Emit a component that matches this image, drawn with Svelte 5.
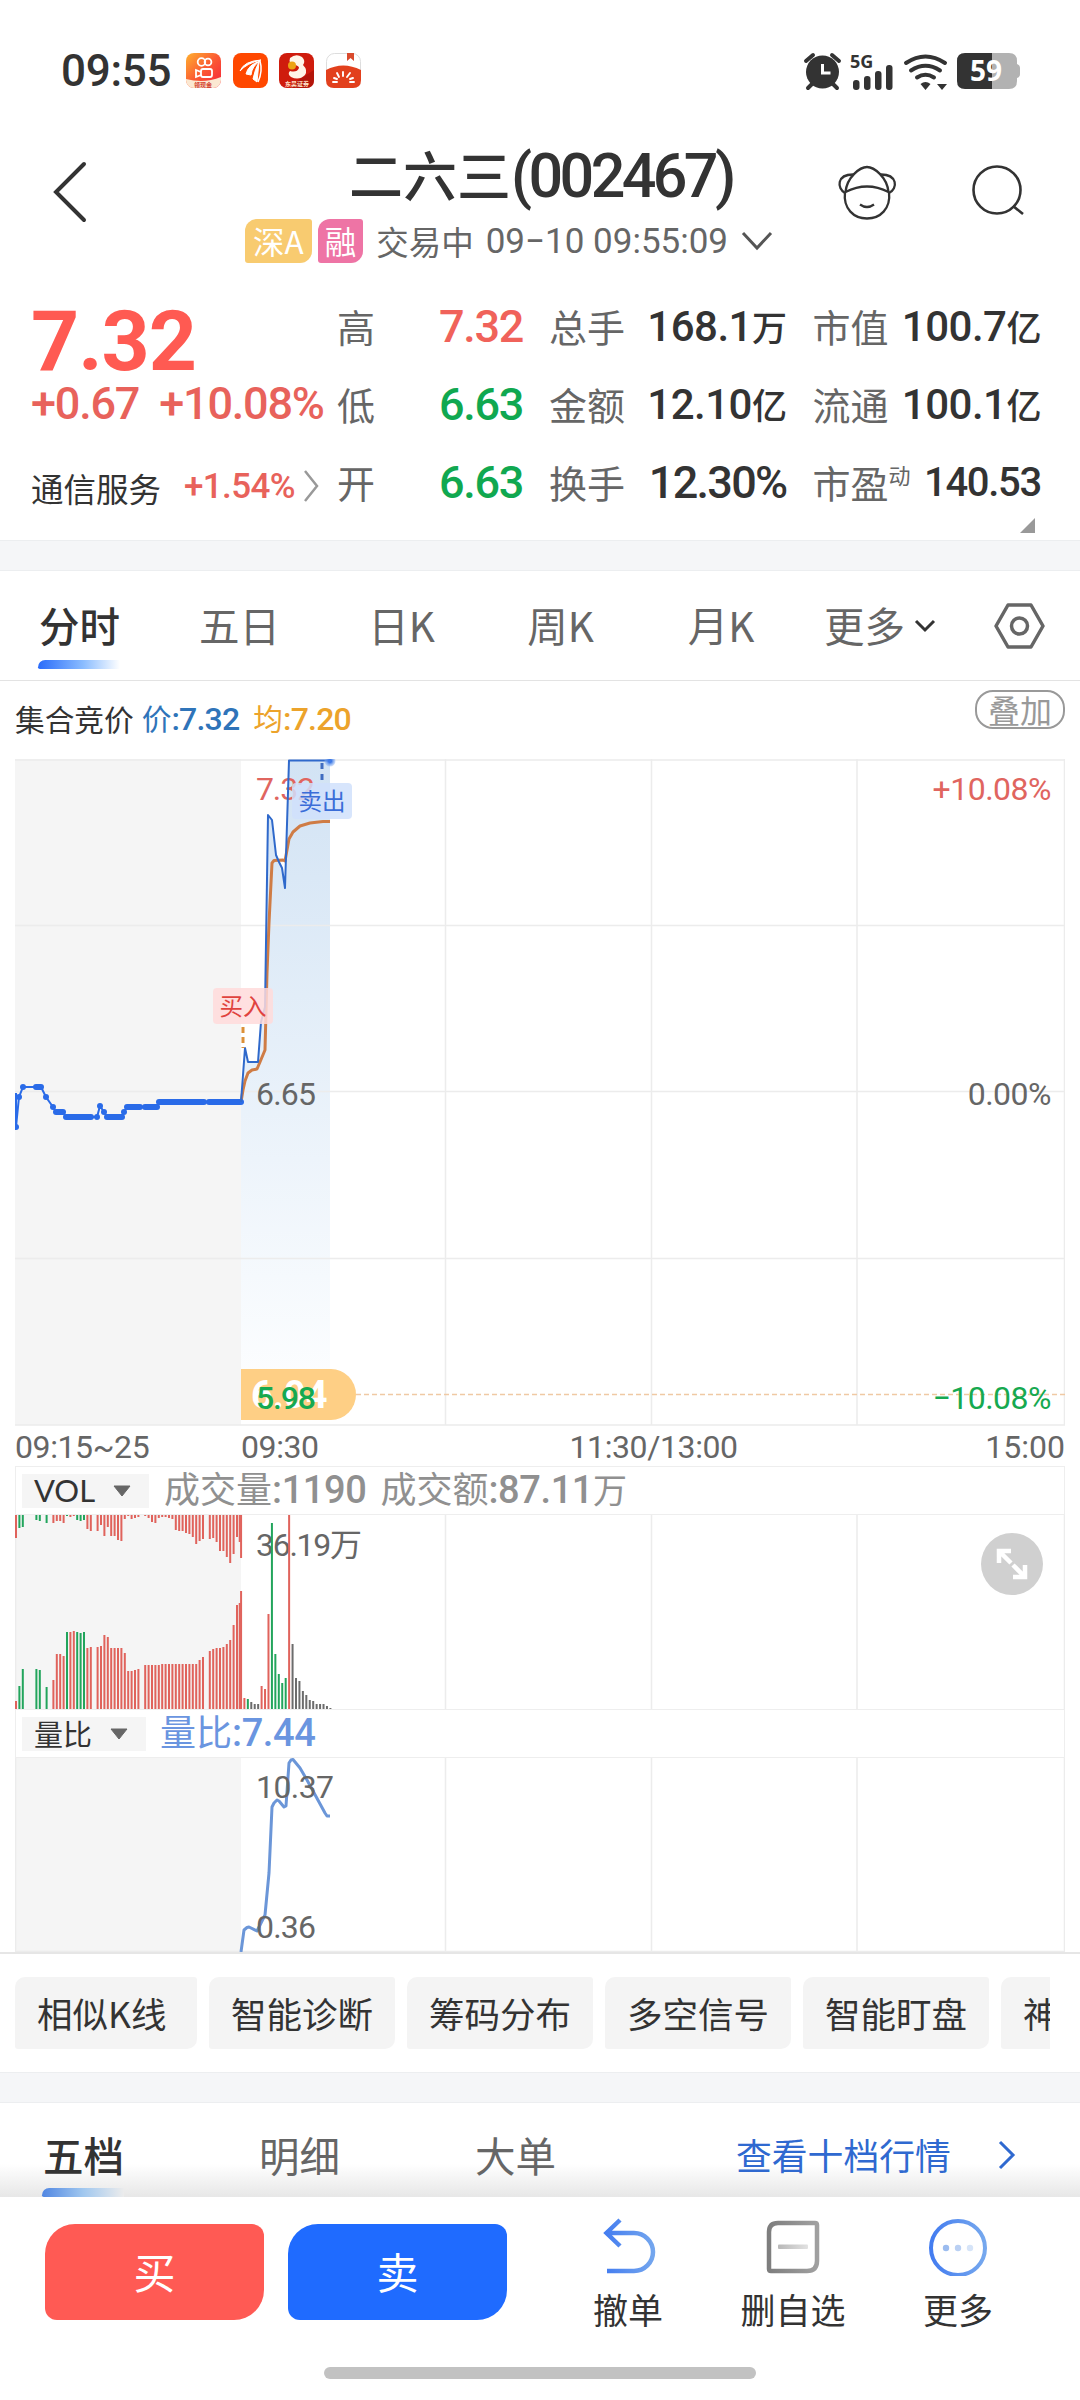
<script lang="ts">
  type Bar = [slot: number, top: number, bottom: number, tone: string];

  const tones: Record<string, string> = {
    r: "#e0635c",
    g: "#22a55c",
    k: "#6c6c6c",
  };

  const columns = [
    {
      name: "price",
      rows: [
        { label: "高", value: "7.32", tone: "up" },
        { label: "低", value: "6.63", tone: "down" },
        { label: "开", value: "6.63", tone: "down" },
      ],
    },
    {
      name: "volume",
      rows: [
        { label: "总手", value: "168.1", unit: "万" },
        { label: "金额", value: "12.10", unit: "亿" },
        { label: "换手", value: "12.30%", tone: "large" },
      ],
    },
    {
      name: "cap",
      rows: [
        { label: "市值", value: "100.7", unit: "亿" },
        { label: "流通", value: "100.1", unit: "亿" },
        { label: "市盈", sup: "动", value: "140.53", tone: "small" },
      ],
    },
  ];

  const periods = ["分时", "五日", "日K", "周K", "月K"];
  const tools = ["相似K线", "智能诊断", "筹码分布", "多空信号", "智能盯盘", "神奇九转"];
  const bookTabs = ["五档", "明细", "大单"];

  let period = $state("分时");
  let bookTab = $state("五档");

  // call auction: unmatched volume hangs from the top, matched grows from the bottom
  const auction: Bar[] = [
    [0, 23, 8, "r"], [1, 13, 23, "g"], [2, 12, 40, "g"], [6, 5, 40, "g"], [7, 6, 39, "g"],
    [9, 8, 22, "g"], [11, 8, 29, "r"], [12, 6, 55, "r"], [13, 6, 55, "r"], [14, 8, 53, "r"],
    [15, 1, 77, "g"], [16, 2, 77, "r"], [17, 1, 78, "r"], [18, 5, 77, "g"], [19, 6, 76, "g"],
    [20, 5, 77, "g"], [21, 14, 61, "r"], [22, 16, 62, "r"], [24, 16, 62, "r"], [25, 10, 63, "r"],
    [26, 21, 74, "r"], [27, 12, 72, "r"], [28, 21, 61, "r"], [29, 21, 61, "r"], [30, 25, 61, "r"],
    [31, 26, 61, "r"], [32, 4, 56, "r"], [33, 1, 38, "r"], [34, 4, 38, "r"], [35, 3, 39, "r"],
    [36, 2, 40, "r"], [38, 1, 44, "r"], [39, 3, 44, "r"], [40, 7, 44, "r"], [41, 8, 44, "r"],
    [42, 3, 44, "r"], [43, 2, 45, "r"], [44, 2, 45, "r"], [45, 3, 45, "r"], [46, 4, 45, "r"],
    [47, 15, 45, "r"], [48, 16, 45, "r"], [49, 16, 45, "r"], [50, 18, 45, "r"], [51, 19, 45, "r"],
    [52, 22, 45, "r"], [53, 29, 45, "r"], [54, 26, 49, "r"], [55, 24, 52, "r"], [57, 24, 58, "r"],
    [58, 23, 60, "r"], [59, 27, 61, "r"], [60, 36, 61, "r"], [61, 36, 62, "r"], [62, 42, 65, "r"],
    [63, 48, 69, "r"], [64, 39, 84, "r"], [65, 22, 104, "r"], [65.8, 27, 106, "r"], [66.2, 43, 118, "r"],
  ];

  const trades: [number, string][] = [
    [11, "r"], [10, "g"], [7, "k"], [5, "k"], [5, "k"], [23, "r"], [20, "r"], [95, "r"],
    [186, "g"], [55, "g"], [35, "g"], [26, "g"], [31, "g"], [194, "r"], [65, "k"], [31, "k"],
    [28, "k"], [18, "k"], [14, "k"], [9, "k"], [8, "k"], [5, "k"], [5, "k"], [5, "k"], [3, "k"], [1, "k"],
  ];

  const auctionLine =
    "1,334 1,368 4,338 8,328 26,328 31,338 38,348 41,353 48,353 51,358 82,358 85,347 89,353 92,358 107,358 109,353 112,348 142,348 144,343 226,343";
  const auctionDots = [[1, 368], [4, 338], [8, 328], [31, 338], [38, 348], [82, 358], [85, 347], [89, 353], [109, 353]];
  const auctionRuns = [[21, 26, 328], [41, 48, 353], [51, 76, 358], [92, 107, 358], [112, 125, 348], [130, 142, 348], [144, 189, 343], [194, 226, 343]];
  const priceLine =
    "226,343 230,289 233,303 243,303 246,263 250,248 253,56 257,61 261,96 264,103 267,109 270,129 274,1.5 315,1.5";
  const averageLine =
    "226,343 228,331 230,322 233,314 237,311 242,310 245,303 250,291 252,214 254,164 257,104 259,101.5 268,101 270,102 274,80 278,73 285,67 295,64 308,62.5 315,62.5";
  const ratioLine =
    "226,194 229,172 232,169.5 234,169 242,173 250,157 254,115 257,49 259,45 262,42 264,43 269,49 271,48 274,5 276,2 278,1.5 285,10 292,22 310,55 312,58 315,58";
</script>

{#snippet triangle()}
  <svg class="triangle" width="18" height="12"><path d="M1 1h16L9 11z" fill="#666" stroke="#666" stroke-linejoin="round" /></svg>
{/snippet}

<main class="app">
  <div class="status">
    <span class="clock">09:55</span>
    <div class="apps">
      <svg width="35" height="35" viewBox="0 0 35 35">
        <defs>
          <linearGradient id="kwai" x2="1" y2="1"><stop stop-color="#ffb02e" /><stop offset=".5" stop-color="#fb5a33" /><stop offset="1" stop-color="#f5203c" /></linearGradient>
          <clipPath id="round"><rect width="35" height="35" rx="8" /></clipPath>
        </defs>
        <g clip-path="url(#round)">
          <rect width="35" height="35" fill="url(#kwai)" />
          <path d="M0 26Q18 31 35 24V35H0z" fill="#fbe8d2" />
        </g>
        <g fill="none" stroke="#fff" stroke-width="1.8"><circle cx="15.5" cy="9" r="3.8" /><circle cx="22" cy="9" r="3.4" /><rect x="15" y="16" width="11" height="8" rx="2" /><path d="M15 19l-5-2v7l5-2" /></g>
        <text x="17" y="34" class="micro" fill="#d3402e">领现金</text>
      </svg>
      <svg width="35" height="35" viewBox="0 0 35 35">
        <rect width="35" height="35" rx="8" fill="#ff4800" />
        <path d="M7 18Q11 8 28 7Q14 10 7 18zM13 21Q15 12 27 8Q19 13 18 22zM20 26Q22 16 26 9Q25 19 24 29z" fill="#fff" stroke="#fff" />
        <path d="M27 8Q30 18 25 29" fill="none" stroke="#fff" stroke-width="1.500" />
      </svg>
      <svg width="35" height="35" viewBox="0 0 35 35">
        <rect width="35" height="35" rx="8" fill="#cf1c0d" />
        <path d="M35 17L18 28l-6 7h15q8 0 8-8z" fill="#b3150a" />
        <path d="M11 5Q17 0 23 4Q27 8 24 12Q29 17 26 22Q20 28 12 24Q8 21 11 18Q18 20 20 15Q20 13 16 12Q9 11 11 5z" fill="#fff6e9" />
        <circle cx="13" cy="12.500" r="4" fill="#eda313" />
        <text x="18" y="33" class="micro" fill="#ffe0c8">东吴证券</text>
      </svg>
      <svg width="35" height="35" viewBox="0 0 35 35">
        <rect x=".5" y=".5" width="34" height="34" rx="8" fill="#fff" stroke="#ddd" />
        <path d="M21 0h7v8l-3.500-3-3.500 3z" fill="#d94a2d" />
        <path d="M0 17Q17 8 35 17V27q0 8-8 8H8q-8 0-8-8z" fill="#e2401d" />
        <path d="M17 19v4M11 20l2 4M24 20l-3 4M8 25l3 1M27 25l-3 1M7 29h4M24 29h4" stroke="#fff" stroke-width="1.900" stroke-linecap="round" />
      </svg>
    </div>
    <svg class="signals" width="218" height="40" viewBox="803 51 218 40">
      <g fill="#333">
        <circle cx="822.500" cy="72" r="16.500" />
        <path d="M806 61l7-6M839 61l-7-6M808 88l5-5M837 88l-5-5" stroke="#333" stroke-width="4" stroke-linecap="round" />
        <text x="850" y="68" class="net">5G</text>
        <rect x="853" y="80" width="6.500" height="10" rx="3" /><rect x="864" y="76" width="6.500" height="14" rx="3" /><rect x="875" y="71" width="6.500" height="19" rx="3" /><rect x="886" y="65" width="6.500" height="25" rx="3" />
        <path d="M920.500 84q5-4 10 0l-5 6zM937 84h10l-5 6z" />
      </g>
      <path d="M822.500 64v9h8" fill="none" stroke="#fff" stroke-width="3" />
      <path d="M906 63q19.500-13 39 0M911 70.500q14.500-9.500 29 0M917 77.500q8.500-5.500 17 0" fill="none" stroke="#333" stroke-width="4" stroke-linecap="round" />
      <path d="M965 53h27v36h-27q-8 0-8-8V61q0-8 8-8z" fill="#333" />
      <path d="M992 53h17q8 0 8 8v3q3 1 3 4v6q0 3-3 4v3q0 8-8 8h-17z" fill="#b2b2b2" />
      <text x="986" y="81" class="charge">59</text>
    </svg>
  </div>

  <header class="header">
    <button class="back" aria-label="返回">
      <svg width="34" height="62" viewBox="53 161 34 62"><path d="M84 164L56 192L84 220" fill="none" stroke="#333" stroke-width="4" stroke-linecap="round" /></svg>
    </button>
    <div class="title">
      <h1>二六三<span>(002467)</span></h1>
      <div class="session">
        <b class="badge sz">深A</b>
        <b class="badge margin">融</b>
        <span class="state">交易中</span>
        <span class="time">09−10 09:55:09</span>
        <svg width="32" height="20"><path d="M2 2l14 15L30 2" fill="none" stroke="#555" stroke-width="3" /></svg>
      </div>
    </div>
    <svg class="assistant" width="62" height="58" viewBox="836 163 62 58" fill="none" stroke="#333" stroke-width="2.300">
      <path d="M845 192C843 209 854 218.500 867 218.500S891 209 889 192" />
      <path d="M845.500 192C847 177 860 167 867 167S887 177 888.500 192Q867 181 845.500 192z" />
      <path d="M845 193C837 189 836 174 854 174.500M889 193C898 189 898 174 880 174.500M860 204.500q7 5 14 0" />
    </svg>
    <svg class="search" width="54" height="54" viewBox="971 164 54 54" fill="none" stroke="#333" stroke-width="2.600"><circle cx="997" cy="190" r="23.500" /><path d="M1013 206l10 8" /></svg>
  </header>

  <section class="quote">
    <div class="last">
      <div class="now">7.32</div>
      <div class="change"><span>+0.67</span><span>+10.08%</span></div>
      <div class="sector">
        <span>通信服务</span><em>+1.54%</em>
        <svg width="18" height="34"><path d="M3 2l12 15L3 32" fill="none" stroke="#999" stroke-width="2.500" /></svg>
      </div>
    </div>
    {#each columns as column}
      <dl class={column.name}>
        {#each column.rows as row}
          <div class="row">
            <dt>{row.label}{#if row.sup}<sup>{row.sup}</sup>{/if}</dt>
            <dd class={row.tone}>{row.value}{#if row.unit}<i>{row.unit}</i>{/if}</dd>
          </div>
        {/each}
      </dl>
    {/each}
    <svg class="corner" width="15" height="15"><path d="M15 0v15H0z" fill="#999" /></svg>
  </section>

  <div class="divider"></div>

  <nav class="periods">
    {#each periods as name}
      <button class:active={period === name} onclick={() => (period = name)}>{name}</button>
    {/each}
    <button>更多<svg width="22" height="14"><path d="M2 2l9 9 9-9" fill="none" stroke="#333" stroke-width="3" /></svg></button>
    <svg class="gear" width="52" height="48" viewBox="994 602 52 48" fill="none" stroke="#666" stroke-width="3.500"><path d="M1008 605h23l12 21-12 21h-23l-12-21z" stroke-linejoin="round" /><circle cx="1019.500" cy="626" r="8" /></svg>
  </nav>

  <div class="legend">
    <span>集合竞价</span>
    <span class="price-text">价<b>:7.32</b></span>
    <span class="avg-text">均<b>:7.20</b></span>
    <button class="overlay">叠加</button>
  </div>

  <svg class="chart" width="1050" height="668">
    <defs>
      <linearGradient id="area" x2="0" y2="1"><stop stop-color="#d2e3f4" /><stop offset="1" stop-color="#fdfeff" /></linearGradient>
      <radialGradient id="pulse"><stop offset=".3" stop-color="#3f7ae6" /><stop offset="1" stop-color="#8cb4f4" stop-opacity=".4" /></radialGradient>
    </defs>
    <rect width="226" height="666" fill="#f5f5f5" />
    <polygon points="{priceLine} 315,634 226,634" fill="url(#area)" />
    <path d="M0 1H1050M0 166.500H1050M0 332.500H1050M0 499.500H1050M0 666H1050M430.500 0V666M636.500 0V666M842 0V666M1049.500 0V666" class="grid" />
    <path d="M341 635.500H1050" stroke="#f0c9a4" stroke-width="1.500" stroke-dasharray="5 3" />
    <g class="scale">
      <text x="241" y="41" textLength="59" class="high">7.32</text>
      <text x="241" y="346" textLength="60">6.65</text>
      <text x="1036" y="41" class="end high">+10.08%</text>
      <text x="1036" y="346" class="end">0.00%</text>
      <text x="1036" y="650" class="end low">−10.08%</text>
    </g>
    <polyline points={averageLine} fill="none" stroke="#cf7c45" stroke-width="3" stroke-linejoin="round" />
    <polyline points={auctionLine} fill="none" stroke="#2a6be8" stroke-width="2" />
    {#each auctionRuns as [from, to, y]}
      <path d="M{from} {y}H{to}" stroke="#2a6be8" stroke-width="6" stroke-linecap="round" />
    {/each}
    {#each auctionDots as [cx, cy]}
      <circle {cx} {cy} r="3" fill="#2a6be8" />
    {/each}
    <polyline points={priceLine} fill="none" stroke="#2f69cb" stroke-width="2" stroke-linejoin="round" />
    <circle cx="315" cy="2" r="5.500" fill="url(#pulse)" />
    <path d="M307 1V23" stroke="#3f6cc0" stroke-width="3" stroke-dasharray="6 5" stroke-dashoffset="-3" />
    <path d="M228 268V289" stroke="#dc9038" stroke-width="3" stroke-dasharray="6 4" />
    <rect x="277" y="24" width="60" height="36" rx="4" fill="#d0e0fc" opacity=".85" />
    <text x="283.500" y="51" class="tag" fill="#3a6dd8">卖出</text>
    <rect x="198" y="229" width="60" height="36" rx="4" fill="#ffdbdb" opacity=".85" />
    <text x="204.500" y="256" class="tag" fill="#e0433e">买入</text>
    <path d="M226 610H316a25 25.500 0 0 1 0 51H226z" fill="#fecf85" />
    <text x="236" y="649" class="cost">6.04</text>
    <text x="241" y="650" textLength="60" class="floor">5.98</text>
  </svg>

  <div class="axis"><span>09:15~25</span><span>09:30</span><span>11:30/13:00</span><span>15:00</span></div>

  <div class="indicator">
    <button class="vol">VOL {@render triangle()}</button>
    <span>成交量<b>:1190</b></span>
    <span>成交额<b>:87.11</b><small>万</small></span>
  </div>
  <div class="panel">
    <svg class="chart" width="1050" height="194">
      <rect width="226" height="194" fill="#f5f5f5" />
      <path d="M430.500 0V194M636.500 0V194M842 0V194M1049.500 0V194M.5 0V194" class="grid" />
      <g class="scale"><text x="241" y="40.500" textLength="106">36.19万</text></g>
      {#each auction as [slot, top, bottom, tone]}
        <rect x={slot * 3.4} y="0" width="2" height={top} fill={tones[tone]} />
        <rect x={slot * 3.4} y={194 - bottom} width="2" height={bottom} fill={tones[tone]} />
      {/each}
      {#each trades as [height, tone], i}
        <rect x={228.4 + i * 3.44} y={194 - height} width="2" {height} fill={tones[tone]} />
      {/each}
    </svg>
    <button class="expand" aria-label="全屏">
      <svg width="62" height="62" fill="none" stroke="#fff" stroke-width="4.500"><path d="M18 30V18h12M18 18l12 12M44 32v12H32M44 44L32 32" /></svg>
    </button>
  </div>

  <div class="indicator ratio">
    <button>量比 {@render triangle()}</button>
    <span>量比<b>:7.44</b></span>
  </div>
  <svg class="chart" width="1050" height="194">
    <rect width="226" height="194" fill="#f5f5f5" />
    <path d="M430.500 0V194M636.500 0V194M842 0V194M1049.500 0V194M.5 0V194M0 193.500H1050" class="grid" />
    <polyline points={ratioLine} fill="none" stroke="#6b96d8" stroke-width="3" stroke-linejoin="round" />
    <g class="scale"><text x="241" y="40" textLength="78">10.37</text><text x="241" y="180" textLength="60">0.36</text></g>
  </svg>

  <div class="tools">
    <div class="scroller">
      {#each tools as tool}<button>{tool}</button>{/each}
    </div>
  </div>

  <div class="divider"></div>

  <nav class="book">
    {#each bookTabs as name}
      <button class:active={bookTab === name} onclick={() => (bookTab = name)}>{name}</button>
    {/each}
    <a href="#depth">查看十档行情<svg width="18" height="30"><path d="M2 2l13 13L2 28" fill="none" stroke="#2f69d0" stroke-width="3" /></svg></a>
  </nav>

  <footer class="actions">
    <button class="trade buy">买</button>
    <button class="trade sell">卖</button>
    <button class="action">
      <svg width="60" height="60" viewBox="598 2215 60 60" fill="none" stroke="url(#blue)" stroke-width="4.500">
        <defs><linearGradient id="blue" gradientUnits="userSpaceOnUse" x1="604" y1="0" x2="656" y2="0"><stop stop-color="#437cf0" /><stop offset="1" stop-color="#76a8ee" /></linearGradient></defs>
        <path d="M607 2232H634a19 19 0 0 1 0 38H607M620 2219L606.500 2232L620 2245" />
      </svg>
      撤单
    </button>
    <button class="action wide">
      <svg width="60" height="60" viewBox="763 2215 60 60" fill="none">
        <defs>
          <linearGradient id="gray" x2="1"><stop stop-color="#7e7e7e" /><stop offset="1" stop-color="#a0a0a0" /></linearGradient>
          <linearGradient id="dash" x2="1"><stop stop-color="#b8b8b8" /><stop offset="1" stop-color="#e2e2e2" /></linearGradient>
        </defs>
        <path d="M778 2222H815q2 0 2 2V2260q0 10-10 10H771q-2 0-2-2V2231q0-9 9-9z" stroke="url(#gray)" stroke-width="4.500" />
        <rect x="778" y="2243.500" width="30" height="4.500" rx="1" fill="url(#dash)" />
      </svg>
      删自选
    </button>
    <button class="action">
      <svg width="60" height="60" viewBox="0 0 60 60" fill="none">
        <defs><linearGradient id="ring" x2="1"><stop stop-color="#437cf0" /><stop offset="1" stop-color="#76a8ee" /></linearGradient></defs>
        <circle cx="30" cy="32" r="27" stroke="url(#ring)" stroke-width="4" />
        <circle cx="18" cy="32" r="3.200" fill="#9cbcef" /><circle cx="30" cy="32" r="3.200" fill="#bad0f3" /><circle cx="42" cy="32" r="3.200" fill="#d6e4f8" />
      </svg>
      更多
    </button>
    <div class="home"></div>
  </footer>
</main>

<style>
  :global(body) {
    margin: 0;
    background: #fff;
  }

  .app {
    width: 1080px;
    height: 2400px;
    overflow: hidden;
    display: flex;
    flex-direction: column;
    color: #333;
    background: #fff;
    font-family: "Noto Sans CJK SC", sans-serif;
    line-height: 1;
    white-space: nowrap;
  }

  .app > * {
    flex-shrink: 0;
    box-sizing: border-box;
  }

  button {
    border: 0;
    padding: 0;
    background: none;
    color: inherit;
    font: inherit;
  }

  svg {
    display: block;
  }

  .status {
    height: 141px;
    display: flex;
    align-items: center;
    padding: 0 59px 0 61px;
  }

  .clock {
    width: 125px;
    font: 500 44px Roboto, sans-serif;
    letter-spacing: -0.3px;
  }

  .apps {
    display: flex;
    gap: 11.7px;
  }

  .micro {
    font-size: 6px;
    font-weight: 700;
    text-anchor: middle;
  }

  .signals {
    margin-left: auto;
    overflow: visible;
  }

  .net {
    font: 700 18px "Open Sans", sans-serif;
  }

  .charge {
    font: 700 28px "Open Sans", sans-serif;
    fill: #fff;
    text-anchor: middle;
  }

  .header {
    height: 139px;
    display: flex;
    padding-left: 53px;
  }

  .back {
    width: 192px;
    height: 102px;
    display: flex;
    align-items: center;
  }

  .title {
    width: 591px;
    display: flex;
    flex-direction: column;
  }

  h1 {
    margin: 0;
    padding: 4px 0 0 104px;
    height: 73px;
    font-size: 54px;
    line-height: 58px;
    font-weight: 500;
  }

  h1 span {
    font-family: Roboto, sans-serif;
    font-size: 61px;
    line-height: 58px;
    letter-spacing: -3.6px;
  }

  .session {
    display: flex;
    align-items: center;
    height: 46px;
    color: #666;
  }

  .badge {
    height: 44px;
    line-height: 42px;
    padding: 0 7px;
    margin-right: 6px;
    border-radius: 12px 3px 12px 3px;
    color: #fff;
    font-size: 31.5px;
    font-weight: 400;
  }

  .sz {
    background: #f8cb70;
    padding: 0 8px;
  }

  .margin {
    background: #ee74a5;
    margin-right: 13px;
  }

  .state {
    font-size: 32.5px;
    margin-right: 12px;
  }

  .time {
    width: 255px;
    font: 400 35px Roboto, sans-serif;
    letter-spacing: 0;
  }

  .assistant {
    margin-top: 22px;
  }

  .search {
    margin: 23px 0 0 73px;
  }

  .quote {
    height: 260px;
    display: flex;
    position: relative;
    padding-left: 31px;
  }

  .last {
    width: 306px;
    color: #e8625b;
    font-family: Roboto, sans-serif;
  }

  .now {
    padding-top: 20px;
    height: 81px;
    font-size: 84px;
    font-weight: 700;
    letter-spacing: -1px;
    color: #ff5a52;
  }

  .change {
    display: flex;
    gap: 20px;
    height: 82px;
    font-size: 45px;
    letter-spacing: -1.2px;
    font-weight: 500;
  }

  .sector {
    display: flex;
    align-items: center;
    height: 46px;
    font-size: 35px;
  }

  .sector span {
    width: 153px;
    padding-top: 2px;
    font: 400 32.5px "Noto Sans CJK SC", sans-serif;
    color: #333;
  }

  .sector em {
    width: 118px;
    font-style: normal;
    font-weight: 500;
    letter-spacing: -0.6px;
  }

  dl {
    margin: 0;
    padding-top: 20px;
  }

  .price {
    width: 186px;
    margin-right: 26px;
  }

  .volume {
    width: 237.5px;
    margin-right: 26px;
  }

  .cap {
    width: 228.5px;
  }

  .row {
    height: 78px;
    display: flex;
    justify-content: space-between;
  }

  dt {
    font-size: 38px;
    line-height: 52px;
    color: #666;
  }

  sup {
    font-size: 22px;
    line-height: 1;
    vertical-align: 14px;
  }

  dd {
    margin: 0;
    font: 500 42px/53px Roboto, sans-serif;
    letter-spacing: -0.5px;
  }

  dd i {
    font: 500 35px/40px "Noto Sans CJK SC", sans-serif;
  }

  .up,
  .down {
    font-size: 45px;
    letter-spacing: -1.3px;
  }

  .up {
    color: #f0625a;
  }

  .down {
    color: #10a850;
  }

  .large {
    font-size: 45px;
    letter-spacing: -1.7px;
  }

  .small {
    font-size: 40px;
    letter-spacing: -1.3px;
  }

  .corner {
    position: absolute;
    right: 45px;
    bottom: 7px;
  }

  .divider {
    height: 31px;
    background: #f5f6f8;
    border: solid #eceef0;
    border-width: 1px 0;
  }

  .periods {
    height: 110px;
    display: grid;
    grid-template-columns: 159px 161px 163px 155px 166px 176px 1fr;
    border-bottom: 1.5px solid #e3e3e3;
    font-size: 40.500px;
    color: #666;
  }

  .periods button {
    display: flex;
    align-items: center;
    justify-content: center;
    gap: 9px;
  }

  .periods button:last-of-type {
    justify-content: flex-start;
    padding-left: 20px;
  }

  .periods .active,
  .book .active {
    position: relative;
    color: #333;
    font-weight: 500;
  }

  .active::after {
    content: "";
    position: absolute;
    left: 38px;
    top: 89px;
    width: 82px;
    height: 9px;
    border-radius: 8px 0 0 2px;
    background: linear-gradient(90deg, #2a6cfa, #8abcff 55%, #fff);
  }

  .gear {
    margin: 31px 0 0 14px;
  }

  .legend {
    height: 78px;
    padding: 0 15px 2px;
    display: flex;
    align-items: center;
    font-size: 29.7px;
  }

  .legend b,
  .indicator b {
    font-family: Roboto, sans-serif;
    font-weight: 500;
  }

  .legend b {
    font-size: 32px;
    letter-spacing: -0.8px;
  }

  .price-text {
    margin: 0 14px 0 8px;
    color: #2f74b9;
  }

  .avg-text {
    color: #eca32b;
  }

  .overlay {
    margin: -20px 0 0 auto;
    width: 90px;
    height: 39px;
    border: 2px solid #999;
    border-radius: 18px;
    color: #999;
    font-size: 32px;
    line-height: 33px;
  }

  .chart {
    margin: 0 15px;
  }

  .grid {
    fill: none;
    stroke: #ececec;
    stroke-width: 1.5;
  }

  .scale,
  .floor {
    font: 400 32px Roboto, "Noto Sans CJK SC", sans-serif;
    fill: #666;
  }

  .high {
    fill: #e0655f;
  }

  .low {
    fill: #16a950;
  }

  .floor {
    fill: #16a950;
    font-weight: 500;
  }

  .end {
    text-anchor: end;
    letter-spacing: -0.5px;
  }

  .tag {
    font-size: 23.500px;
  }

  .cost {
    font: 700 38px Roboto, sans-serif;
    fill: #fff;
  }

  .axis {
    height: 39px;
    margin: 0 15px;
    display: grid;
    grid-template-columns: 226px 1fr 1fr 235px;
    align-items: center;
    font: 400 32px Roboto, sans-serif;
    letter-spacing: -0.4px;
    color: #666;
  }

  .axis span:nth-child(3) {
    padding-left: 34px;
  }

  .axis span:last-child {
    text-align: right;
    letter-spacing: 0;
  }

  .indicator {
    height: 49px;
    margin: 0 15px;
    padding-left: 6px;
    display: flex;
    align-items: center;
    gap: 14px;
    border: 1.5px solid #eee;
    font-size: 36px;
    color: #909090;
  }

  .indicator span {
    padding-bottom: 3px;
  }

  .indicator b {
    font-size: 38px;
    letter-spacing: -0.4px;
  }

  .indicator small {
    font-size: 34px;
  }

  .indicator button {
    width: 124px;
    height: 34px;
    padding-left: 12px;
    display: flex;
    align-items: center;
    gap: 18px;
    background: #f5f5f5;
    color: #333;
    font-size: 29px;
  }

  .indicator .vol {
    width: 127px;
    margin-right: 1px;
    font-family: Lato, sans-serif;
    font-size: 31px;
  }

  .ratio {
    color: #6a95e0;
  }

  .panel {
    position: relative;
  }

  .expand {
    position: absolute;
    right: 37px;
    top: 18px;
    border-radius: 50%;
    background: #d0d0d0;
  }

  .tools {
    height: 120px;
    padding: 23px 30px 0 15px;
    border-top: 2px solid #e6e6e6;
  }

  .scroller {
    display: flex;
    gap: 12px;
    overflow: hidden;
  }

  .scroller button {
    flex-shrink: 0;
    min-width: 182px;
    height: 72px;
    padding: 0 22px;
    border-radius: 10px 3px 10px 3px;
    background: #f4f4f4;
    font-size: 35.5px;
    text-align: left;
  }

  .book {
    height: 94px;
    display: flex;
    align-items: flex-start;
    padding: 32px 0 0 43px;
    font-size: 40.500px;
    color: #666;
    background: linear-gradient(#fff 65%, #e7e7e7);
  }

  .book button {
    width: 216px;
    text-align: left;
  }

  .book .active::after {
    left: -1px;
    top: 53px;
    background: linear-gradient(90deg, #5086e2, #a0c7ef 50%, #ececec);
  }

  .book a {
    display: flex;
    align-items: center;
    gap: 47px;
    margin-left: 45px;
    padding-top: 2px;
    color: #2f69d0;
    font-size: 35.800px;
    text-decoration: none;
  }

  .actions {
    height: 203px;
    position: relative;
    display: flex;
    padding: 27px 0 0 45px;
    background: #fff;
  }

  .trade {
    width: 219px;
    height: 96px;
    margin-right: 24px;
    padding-bottom: 2px;
    border-radius: 30px 12px 30px 12px;
    color: #fff;
    font-size: 42px;
  }

  .buy {
    background: #ff5a54;
  }

  .sell {
    background: #1f6bff;
    margin-right: 37px;
  }

  .action {
    width: 168px;
    height: 110px;
    margin-top: -8px;
    display: flex;
    flex-direction: column;
    align-items: center;
    gap: 15px;
    font-size: 35px;
  }

  .wide {
    width: 162px;
  }

  .home {
    position: absolute;
    left: 324px;
    bottom: 21px;
    width: 432px;
    height: 12px;
    border-radius: 6px;
    background: #c2c2c2;
  }
</style>
